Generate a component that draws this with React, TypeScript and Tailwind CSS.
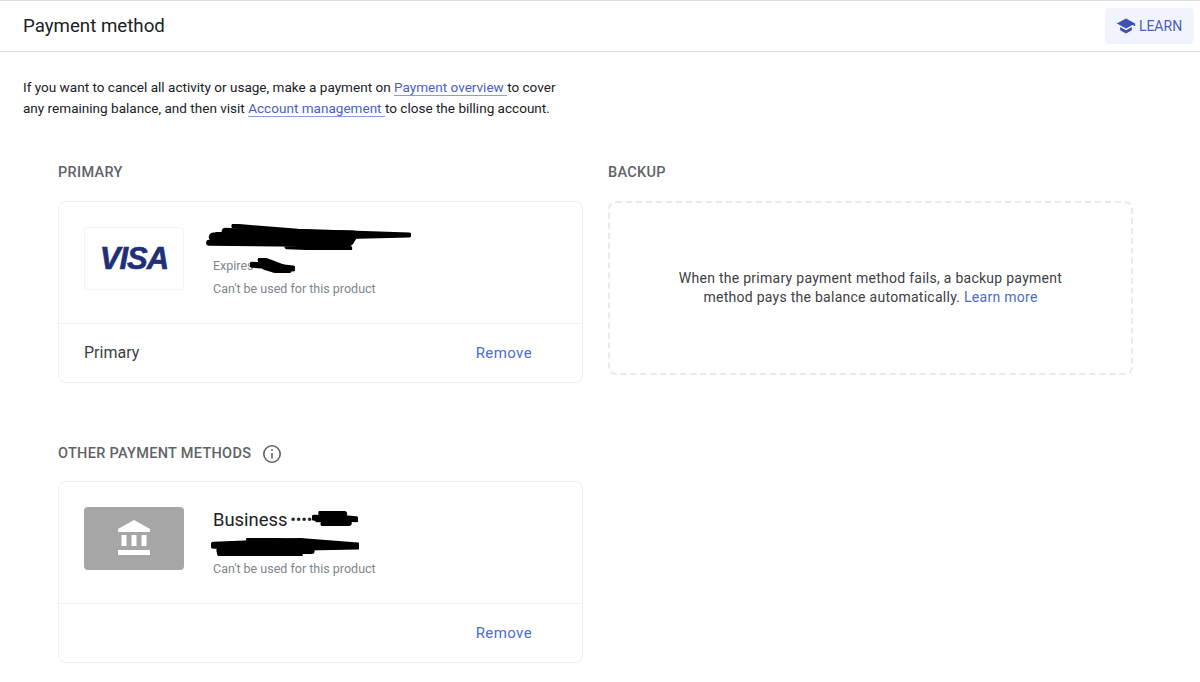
function Scribble({ className, paths }: { className: string; paths: [string, number][] }) {
  return (
    <svg className={className} viewBox="0 0 100 100" preserveAspectRatio="none" fill="none" stroke="#000" strokeLinecap="round" strokeLinejoin="round">
      {paths.map(([d, w], i) => (
        <path key={i} d={d} strokeWidth={w} vectorEffect="non-scaling-stroke" />
      ))}
    </svg>
  );
}

function SectionLabel({ children }: { children: React.ReactNode }) {
  return <div className="text-[14.5px] leading-5 font-medium tracking-[0.3px] text-[#5f6368]">{children}</div>;
}

function BankIcon() {
  return (
    <svg width="32" height="35" viewBox="0 0 32 35" fill="#fff" className="-mt-[2px]">
      <path d="M16 0 32 9V12H0V9Z" />
      <rect x="3.5" y="15" width="5" height="11" />
      <rect x="13.5" y="15" width="5" height="11" />
      <rect x="23.5" y="15" width="5" height="11" />
      <rect x="0" y="30" width="32" height="5" />
    </svg>
  );
}

function CardShell({ top, footer }: { top: React.ReactNode; footer?: string }) {
  return (
    <div className="w-[525px] rounded-lg border border-[#eceef0] bg-white">
      <div className="flex h-[122px] items-start border-b border-[#f1f3f4] px-[25px] pt-[25px]">{top}</div>
      <div className="flex h-[58px] items-center justify-between pr-[50px] pl-[25px]">
        <span className="text-[16px] text-[#3c4043]">{footer}</span>
        <button className="text-[15px] font-[450] tracking-[0.4px] text-[#4a6bd0]">Remove</button>
      </div>
    </div>
  );
}

export default function App() {
  return (
    <div className="h-[682px] w-[1200px] overflow-hidden bg-white font-['Roboto',sans-serif] text-[#202124]">
      <header className="flex h-[52px] items-center justify-between border-y border-[#e0e0e0] pr-[6px] pl-[23px]">
        <h1 className="text-[18.7px] leading-6">Payment method</h1>
        <button className="flex h-9 w-[89px] items-center justify-center gap-[3px] rounded bg-[#f1f3fd] pr-[1px] text-[14px] font-[450] text-[#4a5fc1]">
          <svg width="20" height="20" viewBox="0 0 24 24" fill="#3f51b5">
            <path d="M5 13.18v4L12 21l7-3.82v-4L12 17l-7-3.82zM12 3 1 9l11 6 9-4.91V12h2V9L12 3z" />
          </svg>
          LEARN
        </button>
      </header>

      <p className="mt-[25px] pl-[23px] text-[13.55px] leading-[21px] text-[#202124]">
        If you want to cancel all activity or usage, make a payment on{' '}
        <a className="border-b border-[#8c9be0] text-[#4a5fc1]">Payment overview </a>to cover
        <br />
        any remaining balance, and then visit{' '}
        <a className="border-b border-[#8c9be0] text-[#4a5fc1]">Account management </a>to close the billing account.
      </p>

      <main className="mt-[44px] pl-[58px]">
        <div className="flex gap-[25px]">
          <section>
            <SectionLabel>PRIMARY</SectionLabel>
            <div className="mt-[18px]">
              <CardShell
                footer="Primary"
                top={
                  <>
                    <div className="flex h-[63px] w-[100px] items-center justify-center rounded border border-[#f1f3f4]">
                      <span className="font-['Liberation_Sans',sans-serif] text-[31px] leading-none font-bold tracking-[-1px] text-[#1f2f78] italic [-webkit-text-stroke:0.6px_#1f2f78]">
                        VISA
                      </span>
                    </div>
                    <div className="relative ml-[29px] pt-[29px] text-[12.5px] leading-5 text-[#80868b]">
                      <div>Expires</div>
                      <div className="mt-[3px]">Can't be used for this product</div>
                      <Scribble
                        className="absolute top-[-3px] left-[-8px] h-[26px] w-[206px]"
                        paths={[
                          ['M4 50 L40 38 L72 42 L70 68 L10 60', 9],
                          ['M14 8 L45 28 L99 42 L50 52 L6 40', 5],
                          ['M2 72 L68 78 L40 86 L70 94', 6],
                          ['M10 30 L68 55 L8 62', 8],
                        ]}
                      />
                      <Scribble
                        className="absolute top-[31px] left-[37px] h-[15px] w-[45px]"
                        paths={[
                          ['M5 45 L50 55 L95 70', 6],
                          ['M25 12 L55 45 L85 80', 7],
                          ['M35 55 L75 90', 8],
                        ]}
                      />
                    </div>
                  </>
                }
              />
            </div>
          </section>

          <section>
            <SectionLabel>BACKUP</SectionLabel>
            <div className="mt-[18px] flex h-[174px] w-[525px] items-center justify-center rounded-lg border-2 border-dashed border-[#e8eaed] text-center text-[14px] leading-[19px] text-[#3c4043]">
              <p className="tracking-[0.27px]">
                When the primary payment method fails, a backup payment
                <br />
                method pays the balance automatically. <a className="text-[#4a6bd0]">Learn more</a>
              </p>
            </div>
          </section>
        </div>

        <section className="mt-[61px]">
          <div className="flex items-center gap-[11px]">
            <SectionLabel>OTHER PAYMENT METHODS</SectionLabel>
            <svg width="20" height="20" viewBox="0 0 20 20" fill="none" stroke="#5f6368" strokeWidth="1.6" className="-mt-[1px] shrink-0">
              <circle cx="10" cy="10" r="8.2" />
              <path d="M10 9v5.5" />
              <path d="M10 5.2v1.8" />
            </svg>
          </div>
          <div className="mt-[17px]">
            <CardShell
              top={
                <>
                  <div className="flex h-[63px] w-[100px] items-center justify-center rounded bg-[#a6a6a6]">
                    <BankIcon />
                  </div>
                  <div className="relative ml-[29px] pt-[1px]">
                    <div className="flex items-center text-[18.4px] leading-6 text-[#202124]">
                      Business
                      <span className="ml-[3px] text-[14px] font-bold tracking-[0.5px]">••••</span>
                    </div>
                    <div className="mt-[27px] text-[12.5px] leading-5 text-[#80868b]">Can't be used for this product</div>
                    <Scribble
                      className="absolute top-[4px] left-[99px] h-[15px] w-[46px]"
                      paths={[
                        ['M20 15 L70 20 L30 35 L95 55', 6],
                        ['M5 45 L60 50 L25 85 L80 80', 6],
                        ['M10 65 L100 62', 3],
                      ]}
                    />
                    <Scribble
                      className="absolute top-[31px] left-[-2px] h-[18px] w-[148px]"
                      paths={[
                        ['M2 40 L60 20 L99 45 L30 55 L6 70', 7],
                        ['M25 8 L62 14', 4],
                        ['M6 85 L60 92 L35 70 L68 72', 6],
                      ]}
                    />
                  </div>
                </>
              }
            />
          </div>
        </section>
      </main>
    </div>
  );
}
